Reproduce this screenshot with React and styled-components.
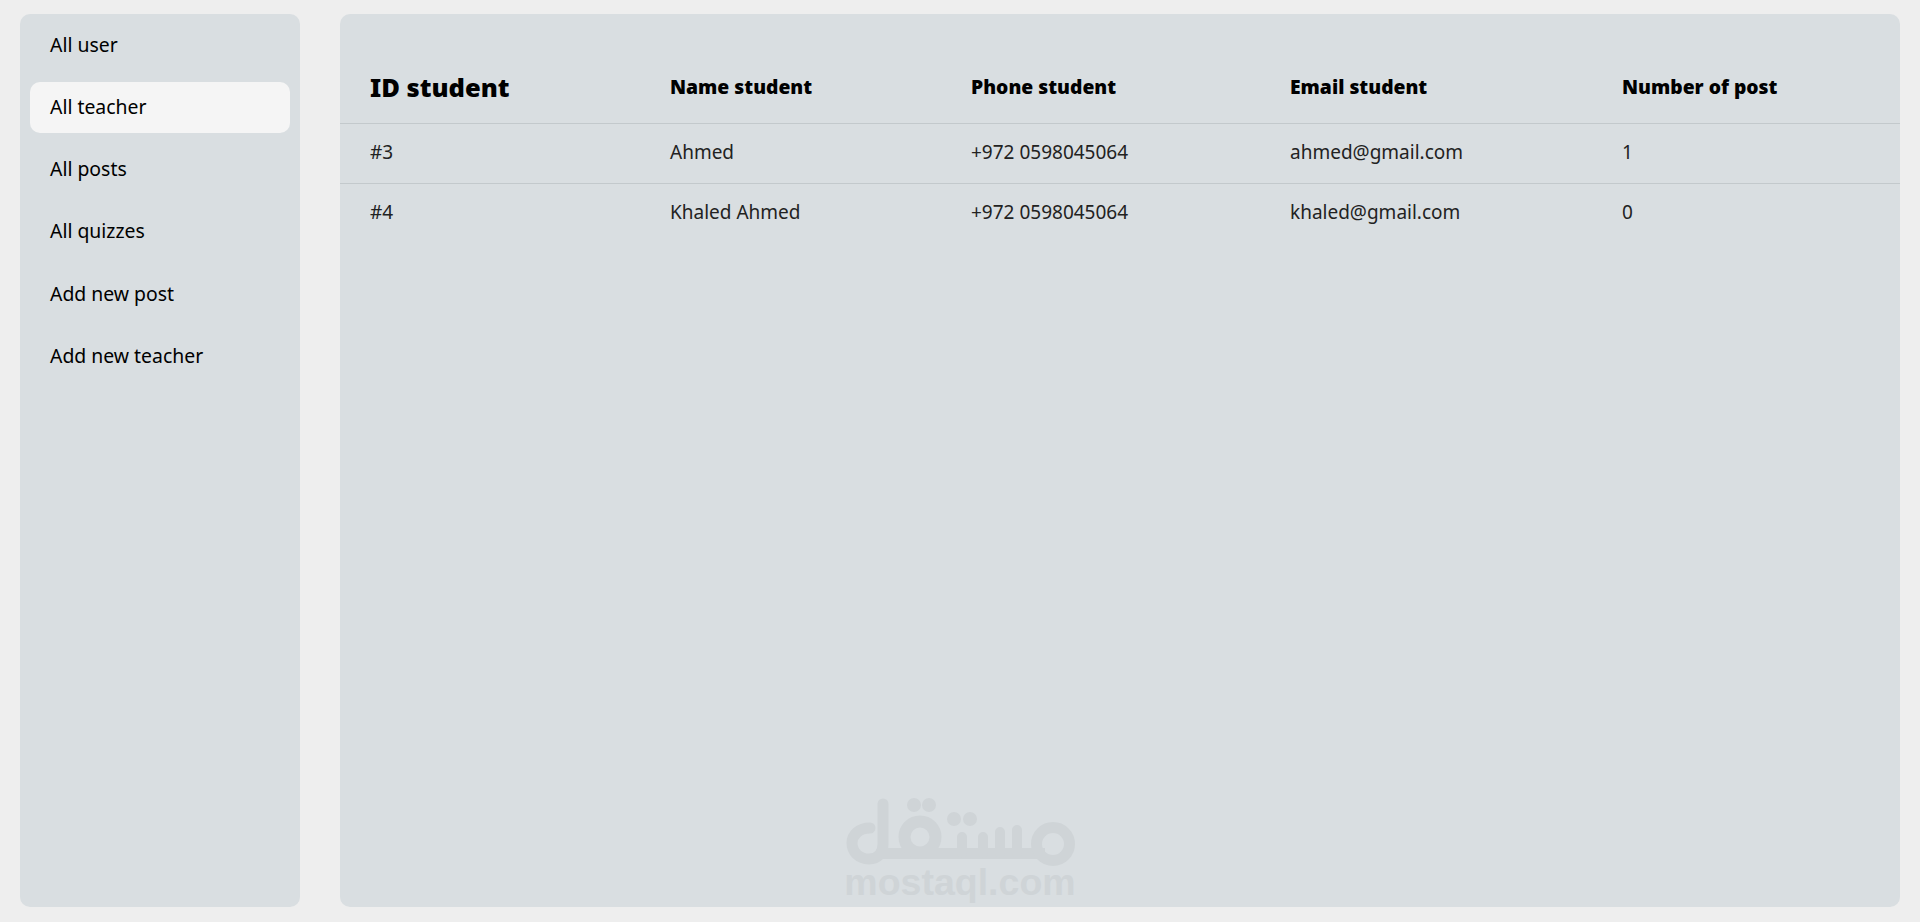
import React from 'react';
import styled, { createGlobalStyle } from 'styled-components';

const GlobalStyle = createGlobalStyle`
html, body {
  margin: 0;
  padding: 0;
  background: #eeeeee;
}
* {
  box-sizing: border-box;
}
`;

const Page = styled.div`
display: flex;
gap: 40px;
height: 922px;
padding: 14px 20px 15px;
overflow: hidden;
background: #eeeeee;
color: #000;
font-family: 'Noto Sans', 'Open Sans', sans-serif;
`;

const Sidebar = styled.nav`
display: flex;
flex-direction: column;
gap: 11.7px;
flex: 0 0 280px;
padding: 6px 10px;
background: #d9dee1;
border-radius: 10px;
`;

const NavItem = styled.a`
display: flex;
align-items: center;
height: 50.5px;
padding: 0 0 2px 20px;
font-size: 19.4px;
color: #000;
border-radius: 10px;
background: ${(props) => (props.$active ? '#f5f5f5' : 'transparent')};
`;

const Main = styled.main`
position: relative;
flex: 1;
background: #d9dee1;
border-radius: 10px;
overflow: hidden;
`;

const Table = styled.table`
width: 100%;
table-layout: fixed;
border-collapse: collapse;
margin-top: 37px;
`;

const Head = styled.th`
width: ${(props) => props.$width}px;
height: 72px;
padding: 0 0 0 30px;
text-align: left;
font-size: ${(props) => (props.$big ? '25.5px' : '19.3px')};
font-weight: 900;
border-bottom: 1px solid #c3c9cc;
`;

const Row = styled.tr`
border-bottom: 1px solid ${(props) => (props.$last ? 'transparent' : '#c3c9cc')};
`;

const Cell = styled.td`
height: 60px;
padding: 0 0 2px 30px;
font-size: 19px;
color: #222;
`;

const Watermark = styled.div`
position: absolute;
left: 505px;
bottom: 9px;
width: 230px;
display: flex;
flex-direction: column;
align-items: center;
color: #cfd4d7;
pointer-events: none;
`;

const WatermarkText = styled.span`
font-family: 'Liberation Sans', Arial, sans-serif;
font-weight: 700;
font-size: 37.5px;
line-height: 32px;
white-space: nowrap;
`;

const students = [
  { id: '#3', name: 'Ahmed', phone: '+972 0598045064', email: 'ahmed@gmail.com', posts: 1 },
  { id: '#4', name: 'Khaled Ahmed', phone: '+972 0598045064', email: 'khaled@gmail.com', posts: 0 },
];

const links = ['All user', 'All teacher', 'All posts', 'All quizzes', 'Add new post', 'Add new teacher'];

function LogoMark() {
  return (
    <svg width="230" height="68" viewBox="0 0 230 68" fill="none" stroke="currentColor" strokeWidth="11" strokeLinecap="round">
      {/* left hook with its stem */}
      <path d="M25 30 C14 30 7 37 7 45 C7 54 14 61 24 61 C33 61 38 55 38 46 V6" />
      {/* baseline */}
      <path d="M38 55.5 H200" strokeLinecap="butt" />
      {/* rings */}
      <circle cx="75" cy="39" r="15.5" strokeWidth="12" />
      <circle cx="208" cy="46" r="16.5" />
      {/* teeth */}
      <path d="M117 39 V55 M138 39 V55 M155 34 V55 M172 32 V55" strokeWidth="10" />
      <g fill="currentColor" stroke="none">
        <circle cx="69" cy="7" r="7" />
        <circle cx="84" cy="7" r="7" />
        <circle cx="109" cy="21" r="7" />
        <circle cx="125" cy="21" r="7" />
      </g>
    </svg>
  );
}

export default function App() {
  return (
    <>
      <GlobalStyle />
      <Page>
        <Sidebar>
          {links.map((link) => (
            <NavItem key={link} $active={link === 'All teacher'}>{link}</NavItem>
          ))}
        </Sidebar>
        <Main>
          <Table>
            <thead>
              <tr>
                <Head $width={300} $big>ID student</Head>
                <Head $width={301}>Name student</Head>
                <Head $width={319}>Phone student</Head>
                <Head $width={332}>Email student</Head>
                <Head $width={308}>Number of post</Head>
              </tr>
            </thead>
            <tbody>
              {students.map((s, i) => (
                <Row key={s.id} $last={i === students.length - 1}>
                  <Cell>{s.id}</Cell>
                  <Cell>{s.name}</Cell>
                  <Cell>{s.phone}</Cell>
                  <Cell>{s.email}</Cell>
                  <Cell>{s.posts}</Cell>
                </Row>
              ))}
            </tbody>
          </Table>
          <Watermark>
            <LogoMark />
            <WatermarkText>mostaql.com</WatermarkText>
          </Watermark>
        </Main>
      </Page>
    </>
  );
}
